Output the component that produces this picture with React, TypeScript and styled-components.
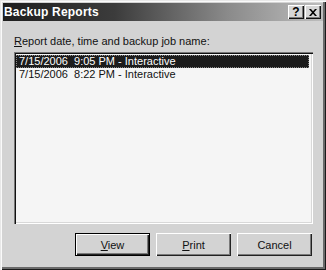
import React from "react";
import styled, { createGlobalStyle } from "styled-components";

const GlobalStyle = createGlobalStyle`
  html, body {
    margin: 0;
    padding: 0;
    background: #d2d2d2;
  }
`;

// ダイアログ全体の枠
const Window = styled.div`
  box-sizing: border-box;
  width: 326px;
  height: 270px;
  padding: 3px;
  display: flex;
  flex-direction: column;
  background: #d3d3d3;
  font-family: "Liberation Sans", Arial, sans-serif;
  font-size: 11px;
  color: #111;
  box-shadow: inset 1px 1px 0 #e8e8e8, inset 2px 2px 0 #fafafa,
    inset -1px -1px 0 #1a1a1a, inset -3px -3px 0 #6a6a6a;
`;

const TitleBar = styled.div`
  height: 18px;
  display: flex;
  align-items: center;
  padding: 0 2px 0 1px;
  background: linear-gradient(to right, #1e1e1e 0%, #3c3c3c 35%, #8a8a8a 70%, #bdbdbd 100%);
`;

const Title = styled.div`
  flex: 1;
  color: #fff;
  font-weight: bold;
  font-size: 12px;
  letter-spacing: 0.2px;
`;

const CaptionButton = styled.div<{ gap?: number }>`
  box-sizing: border-box;
  width: 16px;
  height: 14px;
  display: flex;
  align-items: center;
  justify-content: center;
  background: #d6d6d6;
  color: #000;
  font-weight: bold;
  font-size: 12px;
  line-height: 1;
  box-shadow: inset 1px 1px 0 #fff, inset -1px -1px 0 #111, inset -2px -2px 0 #7a7a7a;
  margin-left: ${(p) => p.gap ?? 0}px;
`;

const Body = styled.div`
  flex: 1;
  display: flex;
  flex-direction: column;
  padding: 14px 9px 0 11px;
`;

const Label = styled.div`
  height: 17px;
  line-height: 13px;
`;

const Key = styled.span`
  text-decoration: underline;
  text-underline-offset: 1px;
`;

const ListBox = styled.div`
  box-sizing: border-box;
  width: 299px;
  height: 172px;
  padding: 3px 4px 2px 2px;
  background: #f5f5f5;
  box-shadow: inset 1px 1px 0 #777, inset 2px 2px 0 #111,
    inset -1px -1px 0 #fff, inset -2px -2px 0 #d8d8d8;
`;

const Row = styled.div<{ selected?: boolean }>`
  height: 13px;
  line-height: 13px;
  padding-left: 3px;
  white-space: pre;
  color: ${(p) => (p.selected ? "#fff" : "#111")};
  background: ${(p) => (p.selected ? "#1c1c1c" : "transparent")};
  outline: ${(p) => (p.selected ? "1px dotted #888" : "none")};
  outline-offset: -1px;
`;

const ButtonRow = styled.div`
  display: flex;
  justify-content: flex-end;
  gap: 6px;
  margin-top: 9px;
  padding-right: 2px;
`;

const Button = styled.div<{ isDefault?: boolean }>`
  box-sizing: border-box;
  width: 75px;
  height: 23px;
  display: flex;
  align-items: center;
  justify-content: center;
  background: #d3d3d3;
  border: ${(p) => (p.isDefault ? "1px solid #000" : "none")};
  box-shadow: inset 1px 1px 0 #fff, inset -1px -1px 0 #222, inset -2px -2px 0 #7a7a7a;
`;

const CloseIcon = () => (
  <svg width="8" height="7" viewBox="0 0 8 7">
    <path d="M0 0h2l2 2.2L6 0h2L5 3.5 8 7H6L4 4.8 2 7H0l3-3.5z" fill="#000" />
  </svg>
);

const rows = [
  "7/15/2006  9:05 PM - Interactive",
  "7/15/2006  8:22 PM - Interactive",
];

const App: React.FC = () => {
  return (
    <>
      <GlobalStyle />
      <Window>
        <TitleBar>
          <Title>Backup Reports</Title>
          <CaptionButton>?</CaptionButton>
          <CaptionButton gap={1}>
            <CloseIcon />
          </CaptionButton>
        </TitleBar>
        <Body>
          <Label>
            <Key>R</Key>eport date, time and backup job name:
          </Label>
          <ListBox>
            {rows.map((r, i) => (
              <Row key={i} selected={i === 0}>
                {r}
              </Row>
            ))}
          </ListBox>
          <ButtonRow>
            <Button isDefault>
              <span>
                <Key>V</Key>iew
              </span>
            </Button>
            <Button>
              <span>
                <Key>P</Key>rint
              </span>
            </Button>
            <Button>Cancel</Button>
          </ButtonRow>
        </Body>
      </Window>
    </>
  );
};

export default App;
